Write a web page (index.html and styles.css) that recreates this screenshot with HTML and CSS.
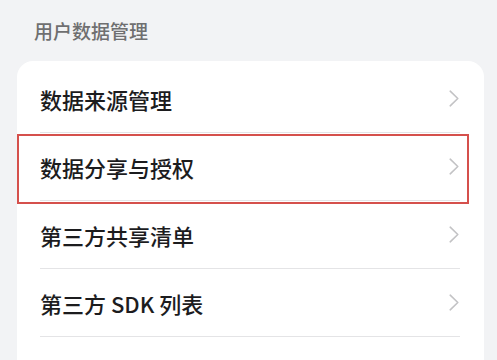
FILE: index.html
```html
<!DOCTYPE html>
<html lang="zh-CN">
<head>
<meta charset="utf-8">
<title>用户数据管理</title>
<link rel="stylesheet" href="styles.css">
</head>
<body>
<div class="page">
  <div class="section-title">用户数据管理</div>
  <div class="card">
    <div class="row"><span class="label">数据来源管理</span><svg class="chev" viewBox="0 0 10 17" width="10" height="17"><polyline points="1.2,1.2 8.8,8.5 1.2,15.8"/></svg></div>
    <div class="row"><span class="label">数据分享与授权</span><svg class="chev" viewBox="0 0 10 17" width="10" height="17"><polyline points="1.2,1.2 8.8,8.5 1.2,15.8"/></svg></div>
    <div class="row"><span class="label">第三方共享清单</span><svg class="chev" viewBox="0 0 10 17" width="10" height="17"><polyline points="1.2,1.2 8.8,8.5 1.2,15.8"/></svg></div>
    <div class="row"><span class="label">第三方 SDK 列表</span><svg class="chev" viewBox="0 0 10 17" width="10" height="17"><polyline points="1.2,1.2 8.8,8.5 1.2,15.8"/></svg></div>
    <div class="row"><span class="label">个人信息收集清单</span><svg class="chev" viewBox="0 0 10 17" width="10" height="17"><polyline points="1.2,1.2 8.8,8.5 1.2,15.8"/></svg></div>
    <div class="highlight"></div>
  </div>
</div>
</body>
</html>
```

FILE: styles.css
```css
html, body {
  margin: 0;
  padding: 0;
  background: #f2f3f5;
  overflow: hidden;
}
.page {
  width: 497px;
  height: 360px;
  overflow: hidden;
  font-family: "Noto Sans CJK SC", "Noto Sans", sans-serif;
}
.section-title {
  padding: 21px 0 0 34px;
  font-size: 19px;
  line-height: 20px;
  font-weight: 500;
  color: #6f6f70;
}
.card {
  position: relative;
  margin: 20px 0 0 17px;
  width: 467px;
  background: #ffffff;
  border-radius: 16px;
  padding-top: 4px;
}
.row {
  display: flex;
  align-items: center;
  justify-content: space-between;
  height: 67px;
  margin: 0 24px 0 23px;
  border-bottom: 1px solid #e4e4e6;
}
.label {
  font-size: 22px;
  line-height: 22px;
  font-weight: 500;
  color: #1c1c1e;
}
.chev {
  margin-right: 1px;
  fill: none;
  stroke: #c3c3c5;
  stroke-width: 1.6;
  stroke-linecap: round;
  stroke-linejoin: round;
}
.highlight {
  position: absolute;
  left: 0;
  top: 73px;
  width: 448px;
  height: 66px;
  border: 2px solid #d5504c;
}
```
